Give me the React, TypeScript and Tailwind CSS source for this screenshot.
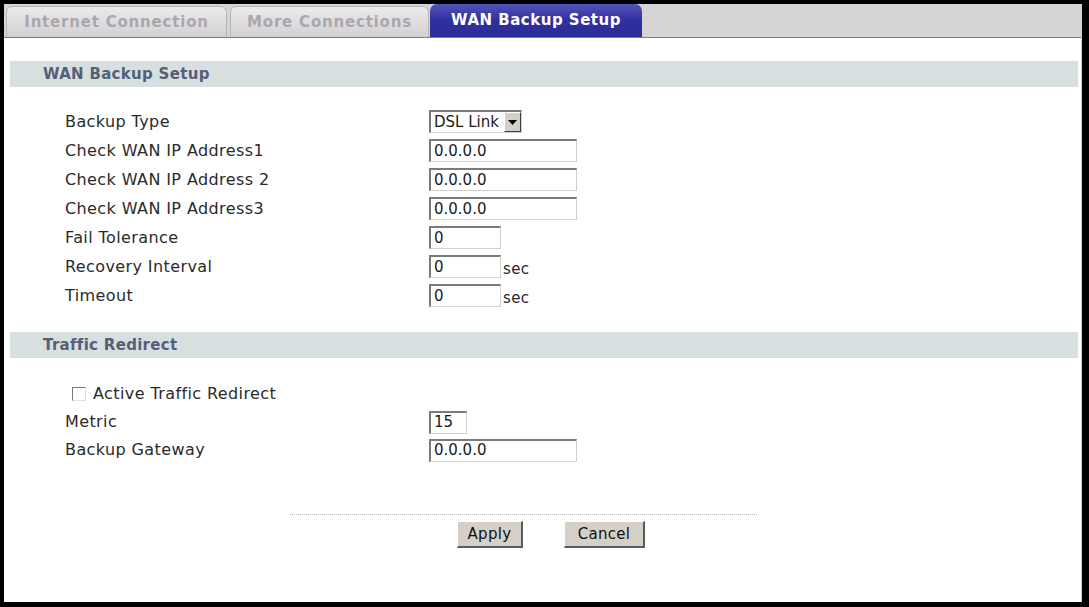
import React from "react";

const font = "font-['DejaVu_Sans','Verdana',sans-serif]";

function TextInput({ value, w }: { value: string; w: string }) {
  return (
    <div
      className={`${w} h-[23px] bg-white border-t-2 border-l-2 border-t-[#7b7b7b] border-l-[#7b7b7b] border-b border-r border-b-[#d4d0c8] border-r-[#d4d0c8] flex items-center pl-[3px] text-[15px] text-[#1a1a1a] leading-none`}
    >
      {value}
    </div>
  );
}

function Row({ label, children, h = "h-[29px]" }: { label: React.ReactNode; children?: React.ReactNode; h?: string }) {
  return (
    <div className={`flex items-center ${h}`}>
      <div className="w-[364px] text-[16px] tracking-[0.4px] text-[#2a2a2a] leading-none">{label}</div>
      <div className="flex items-center">{children}</div>
    </div>
  );
}

function SectionHeader({ title }: { title: string }) {
  return (
    <div className="ml-[6px] mr-[3px] h-[26px] bg-[#d8dfe1] flex items-center pl-[33px]">
      <span className="text-[15px] font-bold tracking-[0.3px] text-[#556075] leading-none">{title}</span>
    </div>
  );
}

export default function App() {
  return (
    <div className={`w-[1089px] h-[607px] bg-black pl-[4px] pt-[4px] pr-[7px] pb-[5px] ${font}`}>
      <div className="h-full bg-white border-r border-[#cfcfcf] flex flex-col">
        {/* Tab bar */}
        <div className="h-[34px] bg-[#d6d4d7] border-b border-[#7d7d7d] flex items-end pl-[2px] shrink-0">
          <div className="w-[221px] h-[31px] rounded-t-[6px] border border-b-0 border-[#b8b6b9] bg-gradient-to-b from-[#eceaec] to-[#d2d0d2] flex items-center justify-center">
            <span className="text-[15px] font-bold tracking-[0.8px] text-[#a9a8ae] leading-none">Internet Connection</span>
          </div>
          <div className="ml-[3px] w-[199px] h-[31px] rounded-t-[6px] border border-b-0 border-[#b8b6b9] bg-gradient-to-b from-[#eceaec] to-[#d2d0d2] flex items-center justify-center">
            <span className="text-[15px] font-bold tracking-[0.8px] text-[#a9a8ae] leading-none">More Connections</span>
          </div>
          <div className="ml-[1px] w-[212px] h-[33px] rounded-t-[7px] bg-gradient-to-b from-[#5454b8] via-[#2f2f9f] to-[#2b2b98] flex items-center justify-center">
            <span className="text-[15px] font-bold tracking-[0.5px] text-white leading-none">WAN Backup Setup</span>
          </div>
        </div>

        <div className="mt-[23px]">
          <SectionHeader title="WAN Backup Setup" />
        </div>

        <div className="pl-[61px] mt-[20px]">
          <Row label="Backup Type">
            <div className="w-[93px] h-[23px] bg-white border-t-2 border-l-2 border-t-[#7b7b7b] border-l-[#7b7b7b] border-b border-r border-b-[#d4d0c8] border-r-[#d4d0c8] flex items-center">
              <span className="flex-1 pl-[3px] text-[15px] text-[#1a1a1a] leading-none">DSL Link</span>
              <div className="w-[17px] h-full bg-[#d4d0c8] border-t border-l border-t-white border-l-white border-b border-r border-b-[#404040] border-r-[#404040] flex items-center justify-center">
                <svg width="9" height="5" viewBox="0 0 9 5"><path d="M0 0h9L4.5 5z" fill="#000" /></svg>
              </div>
            </div>
          </Row>
          <Row label="Check WAN IP Address1"><TextInput value="0.0.0.0" w="w-[148px]" /></Row>
          <Row label="Check WAN IP Address 2"><TextInput value="0.0.0.0" w="w-[148px]" /></Row>
          <Row label="Check WAN IP Address3"><TextInput value="0.0.0.0" w="w-[148px]" /></Row>
          <Row label="Fail Tolerance"><TextInput value="0" w="w-[72px]" /></Row>
          <Row label="Recovery Interval">
            <TextInput value="0" w="w-[72px]" />
            <span className="ml-[2px] mt-[6px] text-[15px] tracking-[0.4px] text-[#2a2a2a] leading-none">sec</span>
          </Row>
          <Row label="Timeout">
            <TextInput value="0" w="w-[72px]" />
            <span className="ml-[2px] mt-[6px] text-[15px] tracking-[0.4px] text-[#2a2a2a] leading-none">sec</span>
          </Row>
        </div>

        <div className="mt-[22px]">
          <SectionHeader title="Traffic Redirect" />
        </div>

        <div className="pl-[61px] mt-[22px]">
          <Row
            h="h-[28px]"
            label={
              <span className="flex items-center pl-[7px]">
                <span className="w-[14px] h-[14px] border border-t-[#7b7b7b] border-l-[#7b7b7b] border-b-[#e0e0e0] border-r-[#e0e0e0] bg-white inline-block" />
                <span className="ml-[7px]">Active Traffic Redirect</span>
              </span>
            }
          />
          <Row h="h-[28px]" label="Metric"><TextInput value="15" w="w-[38px]" /></Row>
          <Row h="h-[28px]" label="Backup Gateway"><TextInput value="0.0.0.0" w="w-[148px]" /></Row>
        </div>

        <div className="mt-[50px] ml-[286px] w-[467px] border-t border-dotted border-[#b5b5b5]" />
        <div className="flex mt-[6px] ml-[453px]">
          <button className="w-[66px] h-[27px] bg-[#d4d0c8] border-t border-l border-t-white border-l-white border-b-2 border-r-2 border-b-[#5a5a5a] border-r-[#5a5a5a] text-[15px] tracking-[0.3px] text-[#111] leading-none">
            Apply
          </button>
          <button className="ml-[41px] w-[81px] h-[27px] bg-[#d4d0c8] border-t border-l border-t-white border-l-white border-b-2 border-r-2 border-b-[#5a5a5a] border-r-[#5a5a5a] text-[15px] tracking-[0.3px] text-[#111] leading-none">
            Cancel
          </button>
        </div>
      </div>
    </div>
  );
}
